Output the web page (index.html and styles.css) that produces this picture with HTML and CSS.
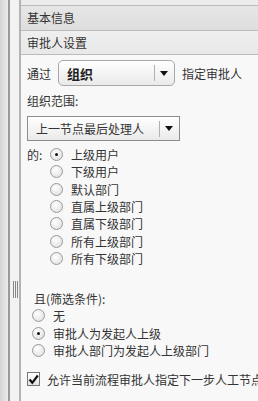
FILE: index.html
```html
<!DOCTYPE html>
<html>
<head>
<meta charset="utf-8">
<link rel="stylesheet" href="styles.css">
</head>
<body>
<div class="app">
  <div class="leftpane"></div>
  <div class="splitter"><div class="grip"><i></i><i></i><i></i></div></div>
  <div class="main">
    <div class="hdr hdr-top"></div>
    <div class="hdr hdr-a">基本信息</div>
    <div class="hdr hdr-b">审批人设置</div>
    <div class="content">
      <div class="row-via">
        <span class="lbl">通过</span>
        <div class="select sel-org"><span class="val bold">组织</span><span class="sep"></span><span class="arrow"></span></div>
        <span class="lbl">指定审批人</span>
      </div>
      <div class="scope-title">组织范围:</div>
      <div class="select sel-scope"><span class="val">上一节点最后处理人</span><span class="sep"></span><span class="arrow"></span></div>
      <div class="of-block">
        <span class="of-lbl">的:</span>
        <ul class="radios">
          <li><span class="radio on"></span>上级用户</li>
          <li><span class="radio"></span>下级用户</li>
          <li><span class="radio"></span>默认部门</li>
          <li><span class="radio"></span>直属上级部门</li>
          <li><span class="radio"></span>直属下级部门</li>
          <li><span class="radio"></span>所有上级部门</li>
          <li><span class="radio"></span>所有下级部门</li>
        </ul>
      </div>
      <div class="filter-title">且(筛选条件):</div>
      <ul class="radios filter">
        <li><span class="radio"></span>无</li>
        <li><span class="radio on"></span>审批人为发起人上级</li>
        <li><span class="radio"></span>审批人部门为发起人上级部门</li>
      </ul>
      <div class="check-row"><span class="checkbox"><svg width="11" height="11" viewBox="0 0 11 11"><path d="M1.5 5.5 L4.3 8.8 L9.8 1.5" fill="none" stroke="#111" stroke-width="2.2"/></svg></span>允许当前流程审批人指定下一步人工节点</div>
    </div>
  </div>
</div>
</body>
</html>
```
FILE: styles.css
```css
html, body { margin: 0; padding: 0; }
body {
  font-family: "Noto Sans CJK SC", "DejaVu Sans", sans-serif;
  font-size: 12px;
  color: #333;
  background: #f8f8f8;
  width: 258px;
  height: 401px;
  overflow: hidden;
}
.app { display: flex; height: 401px; }
.leftpane {
  width: 8px;
  background: linear-gradient(to right, #d4d4d4, #ececec);
  border-right: 2px solid #9a9a9a;
}
.splitter {
  width: 9px;
  background: #f2f2f2;
  border-right: 2px solid #b4b4b4;
  position: relative;
}
.grip {
  position: absolute;
  left: 3px;
  top: 281px;
  display: flex;
  gap: 1px;
}
.grip i { display: block; width: 1px; height: 17px; background: #888; }
.main { flex: 1; min-width: 0; display: flex; flex-direction: column; overflow: hidden; }
.hdr {
  white-space: nowrap;
  padding-left: 6px;
  line-height: 23px;
  border-bottom: 1px solid #bcbcbc;
}
.hdr-top { height: 5px; background: #ececec; }
.hdr-a { height: 24px; line-height: 24px; background: linear-gradient(#e6e6e6, #dedede); }
.hdr-b { height: 23px; background: linear-gradient(#efefef, #e8e8e8); }
.content { flex: 1; padding: 5px 0 0 6px; white-space: nowrap; }
.row-via { display: flex; align-items: center; gap: 7px; height: 26px; }
.row-via .lbl { font-size: 12px; }
.select {
  display: flex;
  align-items: center;
  border: 1px solid #a8a8a8;
  background: linear-gradient(#ffffff, #eaeaea);
  box-sizing: border-box;
}
.sel-org { width: 117px; height: 26px; border-radius: 5px; padding-left: 8px; }
.sel-org .val { font-size: 13px; font-weight: bold; color: #222; flex: 1; }
.sep { width: 1px; height: 16px; background: #b0b0b0; }
.arrow {
  width: 0; height: 0;
  border-left: 4px solid transparent;
  border-right: 4px solid transparent;
  border-top: 5px solid #111;
  margin: 0 6px 0 5px;
}
.scope-title { margin-top: 7px; line-height: 16px; }
.sel-scope { width: 153px; height: 25px; margin-top: 7px; border-color: #8c8c8c; padding-left: 8px; }
.sel-scope .val { flex: 1; }
.of-block { display: flex; margin-top: 5px; }
.of-lbl { width: 23px; line-height: 17px; }
.radios { list-style: none; margin: 0; padding: 0; }
.radios li { display: flex; align-items: center; height: 17.3px; }
.radio {
  display: inline-block;
  box-sizing: border-box;
  width: 13px; height: 13px;
  border-radius: 50%;
  border: 1px solid #9a9a9a;
  background: radial-gradient(circle at 40% 35%, #ffffff, #e2e2e2 80%);
  margin-right: 8px;
  position: relative;
}
.radio.on::after {
  content: "";
  position: absolute;
  left: 4px; top: 4px;
  width: 3px; height: 3px;
  border-radius: 50%;
  background: #111;
}
.filter-title { margin-top: 23px; padding-left: 7px; line-height: 17px; }
.filter { margin-top: 0; padding-left: 5px; }
.check-row { display: flex; align-items: center; margin-top: 13px; height: 15px; }
.checkbox {
  display: inline-flex;
  align-items: center;
  justify-content: center;
  box-sizing: border-box;
  width: 14px; height: 14px;
  border: 1px solid #777;
  background: linear-gradient(#ffffff, #e4e4e4);
  margin-right: 7px;
}
```
